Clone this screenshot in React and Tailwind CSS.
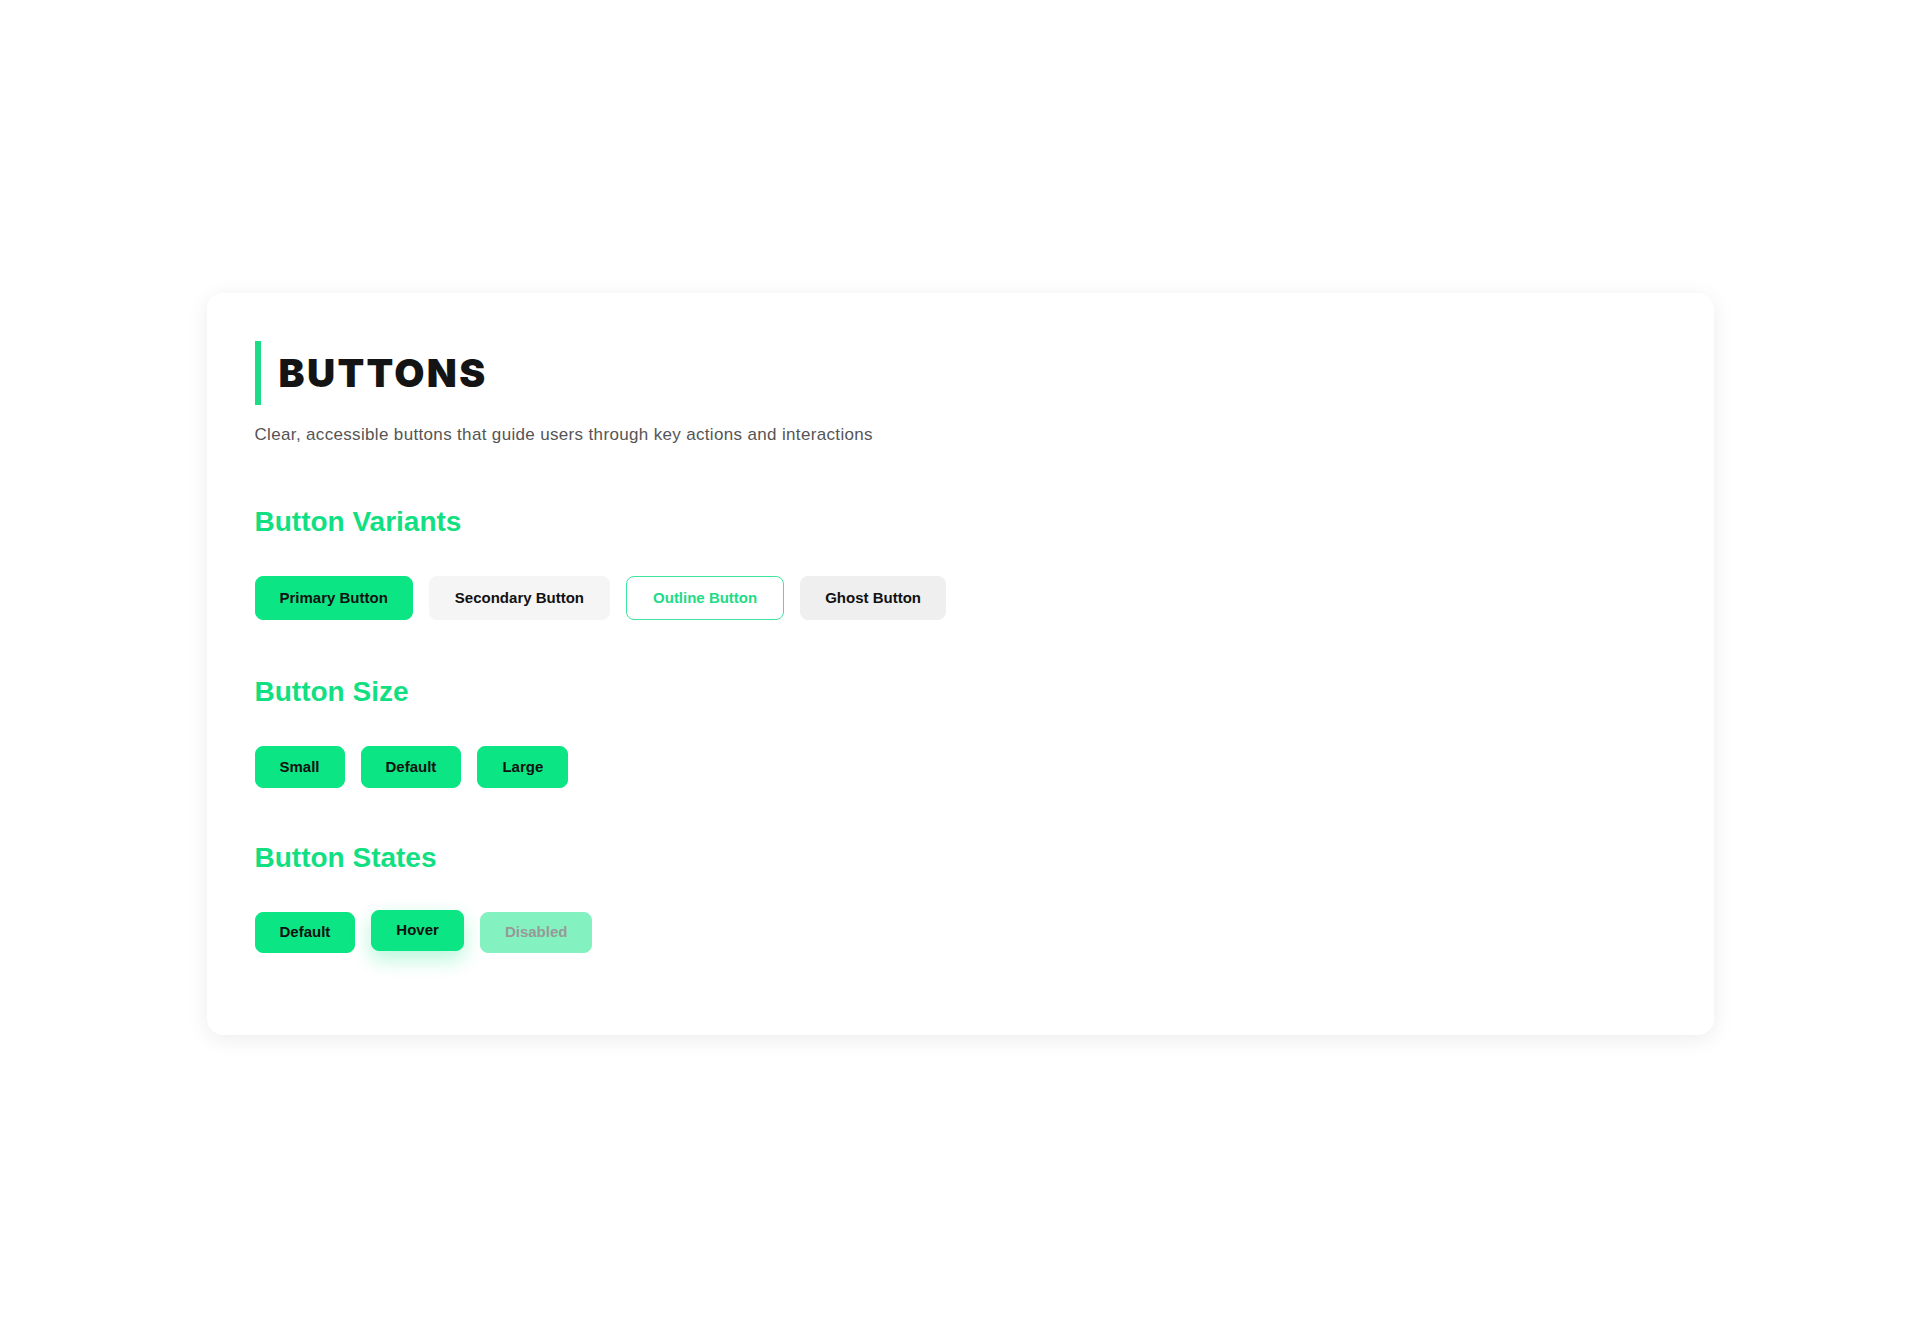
import React from "react";

const font = { fontFamily: '"Liberation Sans", Arial, sans-serif' };

const Section = ({ title, children, gap = "" }) => (
    <div className={gap}>
        <h2 className="h-9 text-[28px] leading-9 font-bold text-[#12df82] mb-9">{title}</h2>
        <div className="flex items-start gap-4">{children}</div>
    </div>
);

const App = () => {
    const base = "px-6 rounded-lg border text-[15px] font-bold leading-5";
    const green = "bg-[#0be583] border-[#0be583] text-[#111]";

    return (
        <div className="min-h-screen bg-white flex items-center justify-center" style={font}>
            <div className="w-[1507px] bg-white rounded-2xl shadow-[0_4px_22px_rgba(0,0,0,0.08)] pt-12 px-12 pb-[82px]">
                {/* header */}
                <div className="h-16 flex items-center border-l-[6px] border-[#1ddb86] pl-[18px]">
                    <h1
                        className="text-[39px] leading-none font-black text-[#141414] tracking-[0.06em]"
                        style={{ fontFamily: 'Inter, "Liberation Sans", sans-serif' }}
                    >
                        BUTTONS
                    </h1>
                </div>
                <p className="mt-4 text-[17px] tracking-[0.02em] leading-7 text-[#555]">
                    Clear, accessible buttons that guide users through key actions and interactions
                </p>

                <div className="mt-[55px]">
                    <Section title="Button Variants" gap="mb-[54px]">
                        <button className={`${base} ${green} h-11`}>Primary Button</button>
                        <button className={`${base} h-11 px-[25px] bg-[#f5f5f5] border-[#f5f5f5] text-[#111]`}>Secondary Button</button>
                        <button className={`${base} h-11 px-[26px] bg-white border-[#3fe59c] text-[#1edb86]`}>Outline Button</button>
                        <button className={`${base} h-11 bg-[#efefef] border-[#efefef] text-[#111]`}>Ghost Button</button>
                    </Section>

                    <Section title="Button Size" gap="mb-[52px]">
                        <button className={`${base} ${green} h-[42px]`}>Small</button>
                        <button className={`${base} ${green} h-[42px]`}>Default</button>
                        <button className={`${base} ${green} h-[42px]`}>Large</button>
                    </Section>

                    <Section title="Button States">
                        <button className={`${base} ${green} h-[41px]`}>Default</button>
                        <button className={`${base} ${green} h-[41px] -translate-y-0.5 shadow-[0_8px_20px_rgba(11,229,131,0.3)]`}>Hover</button>
                        <button className={`${base} ${green} h-[41px] opacity-50 text-[#333]`} disabled>Disabled</button>
                    </Section>
                </div>
            </div>
        </div>
    );
};

export default App;
